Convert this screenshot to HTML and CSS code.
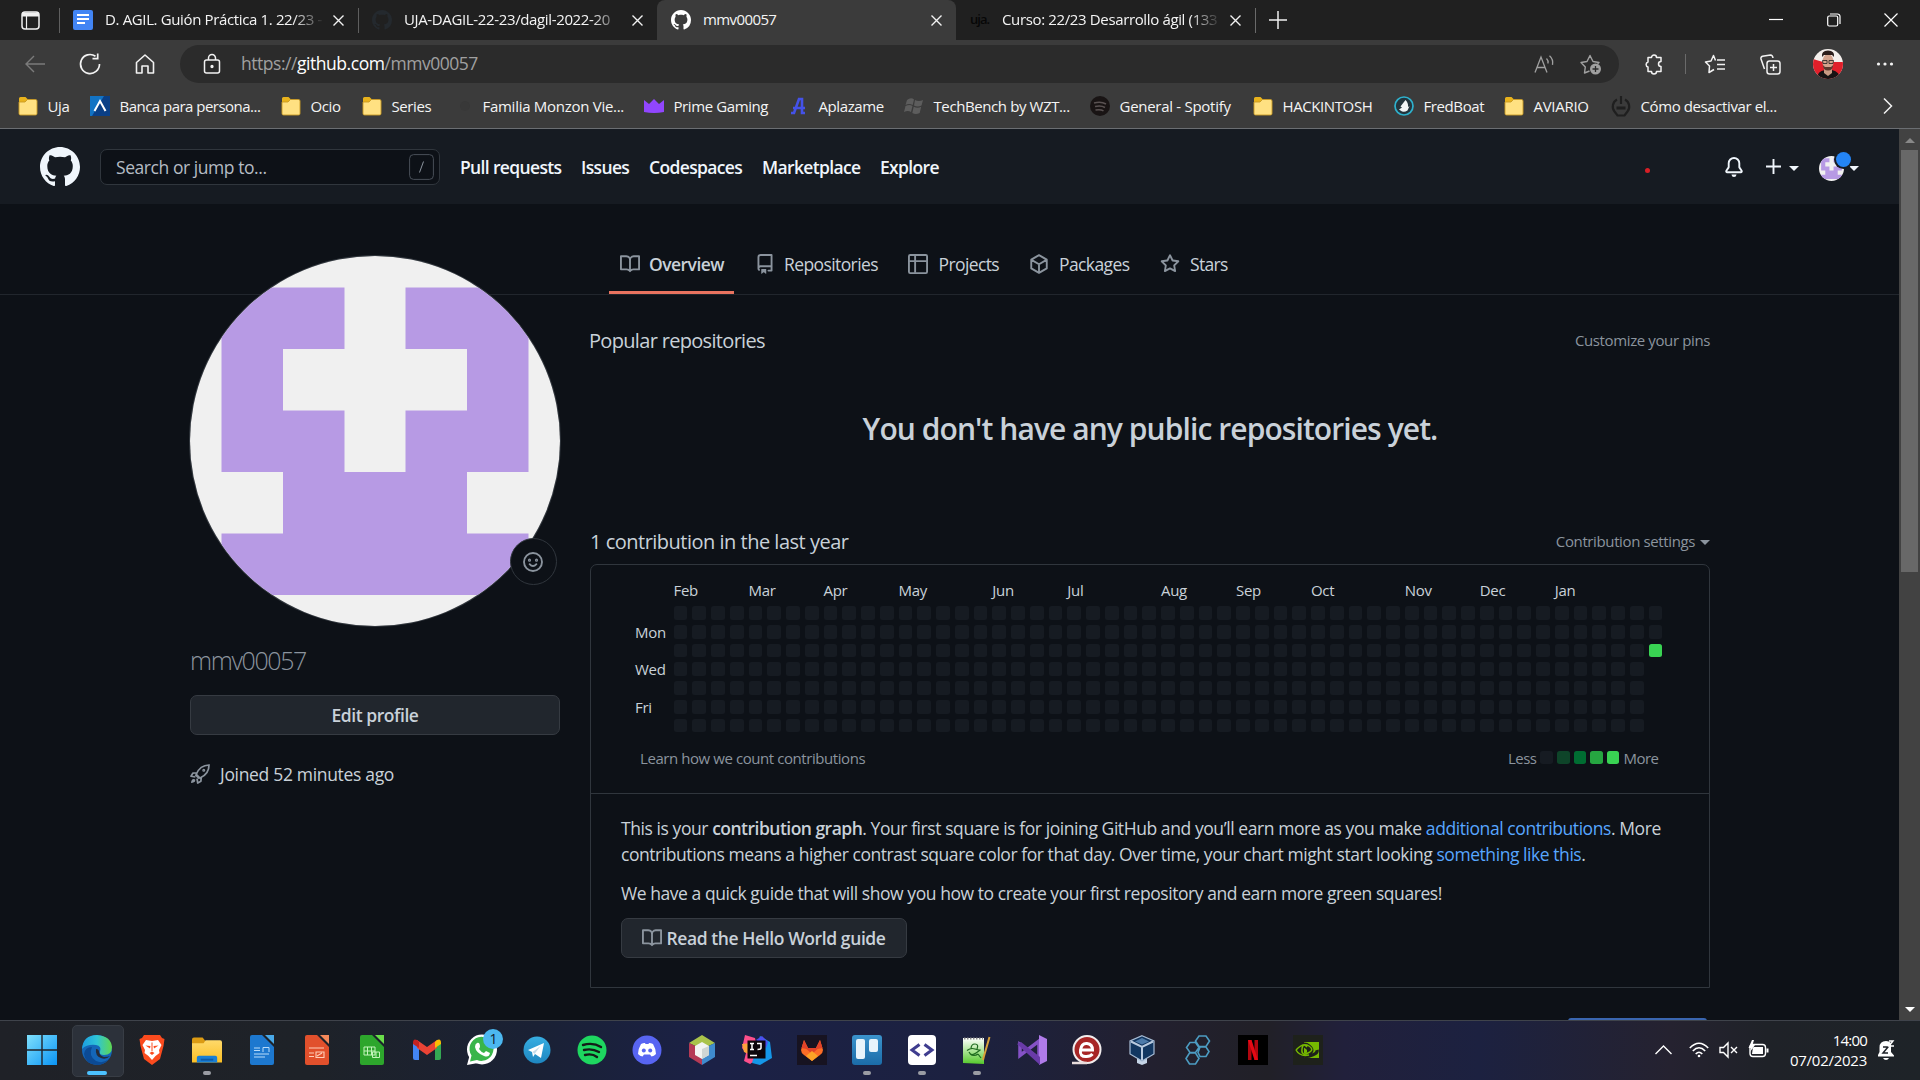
FILE: index.html
```
<!DOCTYPE html>
<html lang="en">
<head>
<meta charset="utf-8">
<title>mmv00057</title>
<link rel="stylesheet" href="styles.css">
</head>
<body>
<svg class="defs" aria-hidden="true">
  <defs>
    <symbol id="octocat" viewBox="0 0 16 16"><path d="M8 0C3.58 0 0 3.58 0 8c0 3.54 2.29 6.53 5.47 7.59.4.07.55-.17.55-.38 0-.19-.01-.82-.01-1.49-2.01.37-2.53-.49-2.69-.94-.09-.23-.48-.94-.82-1.13-.28-.15-.68-.52-.01-.53.63-.01 1.08.58 1.23.82.72 1.21 1.87.87 2.33.66.07-.52.28-.87.51-1.07-1.78-.2-3.64-.89-3.64-3.95 0-.87.31-1.59.82-2.15-.08-.2-.36-1.02.08-2.12 0 0 .67-.21 2.2.82.64-.18 1.32-.27 2-.27.68 0 1.36.09 2 .27 1.53-1.04 2.2-.82 2.2-.82.44 1.1.16 1.92.08 2.12.51.56.82 1.27.82 2.15 0 3.07-1.87 3.75-3.65 3.95.29.25.54.73.54 1.48 0 1.07-.01 1.93-.01 2.2 0 .21.15.46.55.38A8.013 8.013 0 0016 8c0-4.42-3.58-8-8-8z"/></symbol>
    <symbol id="book" viewBox="0 0 16 16"><path fill-rule="evenodd" d="M0 1.75A.75.75 0 01.75 1h4.253c1.227 0 2.317.59 3 1.501A3.744 3.744 0 0111.006 1h4.245a.75.75 0 01.75.75v10.5a.75.75 0 01-.75.75h-4.507a2.25 2.25 0 00-1.591.659l-.622.621a.75.75 0 01-1.06 0l-.622-.621A2.25 2.25 0 005.258 13H.75a.75.75 0 01-.75-.75V1.75zm8.755 3a2.25 2.25 0 012.25-2.25H14.5v9h-3.757c-.71 0-1.4.201-1.992.572l.004-7.322zm-1.504 7.324l.004-5.073-.002-2.253A2.25 2.25 0 005.003 2.5H1.5v9h3.757a3.75 3.75 0 011.994.574z"/></symbol>
    <symbol id="folder" viewBox="0 0 20 20"><path d="M1 2.5A1.5 1.5 0 012.5 1h5L9.500 3v3H1z" fill="#e8b21c"/><path d="M1 6h6l2.500-2.500h8A1.500 1.500 0 0119 5v12.500a1.500 1.500 0 01-1.500 1.500h-15A1.500 1.500 0 011 17.500z" fill="#ffe182" stroke="#c99b25" stroke-width=".9"/></symbol>
    <symbol id="close" viewBox="0 0 11 11"><path d="M.5.5l10 10m0-10l-10 10" fill="none" stroke="#f2f2f2" stroke-width="1.4"/></symbol>
    <symbol id="identicon" viewBox="0 0 370 370"><rect width="370" height="370" fill="#f0f0f0"/><path fill="#b79ae4" d="M31.500 31.500h123V93H93v61.500h61.500V216h61V154.500H277V93h-61.500V31.500h123V216H277v61.500h61.500V339h-307v-61.500H93V216H31.500z"/></symbol>
    <linearGradient id="gWin" x2="1" y2="1"><stop stop-color="#7fe0fc"/><stop offset="1" stop-color="#0a94f5"/></linearGradient>
    <linearGradient id="gEdge" x2="1" y2="0"><stop stop-color="#1b9de2"/><stop offset=".5" stop-color="#2fc4d6"/><stop offset="1" stop-color="#60d94f"/></linearGradient>
    <linearGradient id="gFile" x2="0" y2="1"><stop stop-color="#ffd96a"/><stop offset="1" stop-color="#fbbf24"/></linearGradient>
    <linearGradient id="gTg" x2="0" y2="1"><stop stop-color="#37aee2"/><stop offset="1" stop-color="#1e86c0"/></linearGradient>
    <linearGradient id="gNote" x2="0" y2="1"><stop stop-color="#fff"/><stop offset="1" stop-color="#55c92b"/></linearGradient>
    <linearGradient id="gTrello" x2="0" y2="1"><stop stop-color="#3b93cc"/><stop offset="1" stop-color="#1b6ca8"/></linearGradient>
  </defs>
</svg>

<div class="tabstrip">
  <div class="tab-actions"><svg width="19" height="19" viewBox="0 0 19 19" fill="none" stroke="#f0f0f0"><rect x="1" y="1" width="17" height="17" rx="3" stroke-width="1.500"/><path d="M1 3.500h17" stroke-width="4"/><path d="M5.500 4v14" stroke-width="1.200"/></svg></div>
  <div class="tab ruled">
    <svg class="fav" viewBox="0 0 20 20"><rect width="20" height="20" rx="2" fill="#4285f4"/><path d="M4 5h12M4 9h12M4 13h8" stroke="#fff" stroke-width="2"/></svg>
    <span class="tab-title fade">D. AGIL. Guión Práctica 1. 22/23 -</span><svg class="x"><use href="#close"/></svg>
  </div>
  <div class="tab ruled">
    <svg class="fav" fill="#24292e"><use href="#octocat"/></svg>
    <span class="tab-title fade">UJA-DAGIL-22-23/dagil-2022-20</span><svg class="x"><use href="#close"/></svg>
  </div>
  <div class="tab active">
    <svg class="fav" fill="#fff"><use href="#octocat"/></svg>
    <span class="tab-title">mmv00057</span><svg class="x"><use href="#close"/></svg>
  </div>
  <div class="tab">
    <span class="fav uja">uja.</span>
    <span class="tab-title fade">Curso: 22/23 Desarrollo ágil (133</span><svg class="x"><use href="#close"/></svg>
  </div>
  <div class="new-tab"><svg width="18" height="18" viewBox="0 0 18 18" stroke="#f0f0f0" stroke-width="1.500"><path d="M9 0v18M0 9h18"/></svg></div>
  <div class="win-controls" aria-hidden="true">
    <svg width="14" height="14" viewBox="0 0 14 14" fill="none" stroke="#fff" stroke-width="1.200"><path d="M0 6.500h14"/></svg>
    <svg width="14" height="14" viewBox="0 0 14 14" fill="none" stroke="#fff" stroke-width="1.200"><rect x=".7" y="3" width="10" height="10" rx="1.500"/><path d="M3 1h7.500a2.500 2.500 0 012.500 2.500V11"/></svg>
    <svg width="14" height="14" viewBox="0 0 14 14" fill="none" stroke="#fff" stroke-width="1.200"><path d="M.5.5l13 13m0-13l-13 13"/></svg>
  </div>
</div>

<div class="chrome">
  <div class="toolbar">
    <svg width="20" height="18" viewBox="0 0 20 18" fill="none" stroke="#7b7b7b" stroke-width="1.400"><path d="M20 9H1M9 1L1 9l8 8"/></svg>
    <svg width="22" height="22" viewBox="0 0 22 22" fill="none" stroke="#f2f2f2" stroke-width="1.700"><path d="M20.500 11A9.500 9.500 0 1116.500 3.300M18.700.5v5.200h-5.200"/></svg>
    <svg width="20" height="20" viewBox="0 0 20 20" fill="none" stroke="#f2f2f2" stroke-width="1.600" stroke-linejoin="round"><path d="M1.500 8.500L10 1l8.500 7.500V19h-5.500v-7H7v7H1.500z"/></svg>
    <div class="address">
      <svg class="lock" width="18" height="20" viewBox="0 0 18 20" fill="none" stroke="#f2f2f2" stroke-width="1.500"><rect x="1.500" y="6" width="15" height="13" rx="2"/><path d="M5.500 6V4a3.500 3.500 0 017 0v2"/><circle cx="9" cy="12.500" r=".9" fill="#f2f2f2"/></svg>
      <span class="url">https://<b>github.com</b>/mmv00057</span>
      <svg width="20" height="18" viewBox="0 0 20 18" fill="none" stroke="#a0a0a0" stroke-width="1.300"><path d="M1 17.500L7 2l6 15.500M3 12.500h8M12.500 3.500q2 2 1.500 5M15.500 .8q4 3.500 3 9"/></svg>
      <svg width="22" height="21" viewBox="0 0 22 21"><path fill="none" stroke="#a0a0a0" stroke-width="1.400" stroke-linejoin="round" d="M9.500 17L4.500 19l.8-6L1 8.500l6-1L10 1.500l3 6 6 1-1.500 1.500"/><circle cx="15.500" cy="15" r="5.500" fill="#a0a0a0"/><path d="M15.500 12v6m-3-3h6" stroke="#2b2b2b" stroke-width="1.300"/></svg>
    </div>
    <svg width="20" height="20" viewBox="0 0 20 20" fill="none" stroke="#f2f2f2" stroke-width="1.500" stroke-linejoin="round"><path d="M4 3.500h3.500a2.500 2.500 0 015 0H17v4a2.500 2.500 0 000 5v5h-4.500a2.500 2.500 0 01-5 0H4v-4.500a2.600 2.600 0 010-5z"/></svg>
    <span class="tool-rule"></span>
    <svg width="20" height="20" viewBox="0 0 20 20" fill="none" stroke="#f2f2f2" stroke-width="1.500" stroke-linejoin="round"><path d="M10.500 6.500L8.500 1.500l-2.500 5.500-5.500 1 4 4L4 18.500l5-3M12 6h8M12 10.500h8M12 15h8"/></svg>
    <svg width="21" height="21" viewBox="0 0 21 21" fill="none" stroke="#f2f2f2" stroke-width="1.500"><rect x="7" y="7" width="13" height="13" rx="2.500"/><path d="M13.500 10v7M10 13.500h7M4.500 15L1 5q-.5-2 1.500-2.800L10.500 1q2 0 2.500 3"/></svg>
    <svg width="30" height="30" viewBox="0 0 30 30"><defs><clipPath id="me"><circle cx="15" cy="15" r="15"/></clipPath></defs><g clip-path="url(#me)"><path fill="#f4efec" d="M0 0h30v30H0z"/><path fill="#e01f2a" d="M0 10l10 3h20v17H0z"/><path fill="#171314" d="M4 30q0-8 8-9h7q8 2 8 9z"/><path fill="#c99a84" d="M11 17h8v7l-4 3-4-3z"/><ellipse cx="15" cy="13" rx="5.500" ry="8" fill="#d3a38d"/><path fill="#2c1d1a" d="M9 8Q8 1.500 15 1.500T21 8l-2-2h-8z"/><path fill="#5a3a30" d="M9.800 16q.5 5.500 5.200 5.500t5.200-5.500l-2.200 2h-6z"/><path d="M9.500 11.500h4.500v3H10zM16 11.500h4.500l-.5 3h-4z" fill="none" stroke="#222" stroke-width=".8"/></g></svg>
    <svg width="18" height="4" viewBox="0 0 18 4" fill="#f2f2f2"><circle cx="2.500" cy="2" r="1.600"/><circle cx="9" cy="2" r="1.600"/><circle cx="15.500" cy="2" r="1.600"/></svg>
  </div>

  <div class="bookmarks">
    <div class="bm"><svg><use href="#folder"/></svg>Uja</div>
    <div class="bm tight"><svg viewBox="0 0 20 20"><path fill="#0a3f86" d="M0 0h20v20H0z"/><path fill="#1273c4" d="M0 0h14L2 20H0z"/><path d="M4.500 15L10 5l5.500 10" fill="none" stroke="#fff" stroke-width="2"/></svg>Banca para persona...</div>
    <div class="bm"><svg><use href="#folder"/></svg>Ocio</div>
    <div class="bm"><svg><use href="#folder"/></svg>Series</div>
    <div class="bm wide"><svg viewBox="0 0 20 20"><circle cx="12" cy="10" r="5" fill="#383838"/></svg>Familia Monzon Vie...</div>
    <div class="bm"><svg viewBox="0 0 20 20"><path fill="#9146ff" d="M0 4l5 4 5-5 5 5 5-4v12q-10 2-20 0z"/></svg>Prime Gaming</div>
    <div class="bm"><svg viewBox="0 0 20 20"><path d="M2 17h3l5-14h3v14h3M4 12h12" fill="none" stroke="#4452e8" stroke-width="2.600"/></svg>Aplazame</div>
    <div class="bm"><svg viewBox="0 0 20 20"><path fill="#5d5d5d" d="M3 4q4-3 7-.5L8.700 9Q5 7 1.500 9zM11 4q4 2 8 0l-1.500 5.500q-4 2-7.500 0zM1.500 10q4-2 7 0L7 16q-3-2-7 0zM9.700 10.800q4 2 7.500 0L15.700 17q-4 2-7.400 0z"/></svg>TechBench by WZT...</div>
    <div class="bm wide"><svg viewBox="0 0 20 20"><circle cx="10" cy="10" r="10" fill="#191414"/><path d="M4 7q7-2 12 1M5 10.500q6-1.500 10 1M5.500 14q5-1 8 .8" fill="none" stroke="#5a5252" stroke-width="1.500"/></svg>General - Spotify</div>
    <div class="bm"><svg><use href="#folder"/></svg>HACKINTOSH</div>
    <div class="bm"><svg viewBox="0 0 20 20"><circle cx="10" cy="10" r="9" fill="#24343c" stroke="#2eb1cd" stroke-width="1.700"/><path fill="#f2f5f6" d="M5 13.500l3-2-1.500-1 5-6.500q3 3 2.500 7l1.500-1-2 4.500q-4 2.500-7 0z"/></svg>FredBoat</div>
    <div class="bm wide"><svg><use href="#folder"/></svg>AVIARIO</div>
    <div class="bm"><svg viewBox="0 0 20 20" fill="none" stroke="#1f1f1f" stroke-width="2.200"><path d="M10 0v8M6 3.500a8 8 0 00-2.500 12l3 4h7l3-4a8 8 0 00-2.500-12"/><path d="M5.500 12h9" stroke-width="3"/></svg>Cómo desactivar el...</div>
    <svg class="more" width="10" height="16" viewBox="0 0 10 16" fill="none" stroke="#f2f2f2" stroke-width="1.500"><path d="M1 .5L8.500 8 1 15.500"/></svg>
  </div>
</div>

<div class="viewport">
  <div class="page">
    <header class="gh-header">
      <svg class="gh-logo" fill="#f0f6fc"><use href="#octocat"/></svg>
      <div class="search"><span>Search or jump to...</span><svg width="25" height="26" viewBox="0 0 25 26" fill="none" stroke="#484f58"><rect x=".6" y=".6" width="23.800" height="24.800" rx="4"/><path d="M10.500 18.500l4-11" stroke="#8b949e"/></svg></div>
      <nav class="gh-nav"><a>Pull requests</a><a>Issues</a><a>Codespaces</a><a>Marketplace</a><a>Explore</a></nav>
      <i class="rec"></i>
      <svg class="bell" width="20" height="20" viewBox="0 0 16 16" fill="#f0f6fc"><path d="M8 16a2 2 0 001.985-1.750c.017-.137-.097-.25-.235-.25h-3.500c-.138 0-.252.113-.235.25A2 2 0 008 16zM3 5a5 5 0 0110 0v2.947c0 .05.015.098.042.139l1.703 2.555A1.518 1.518 0 0113.482 13H2.518a1.518 1.518 0 01-1.263-2.360l1.703-2.554A.25.25 0 003 7.947V5zm5-3.500A3.500 3.500 0 004.500 5v2.947c0 .346-.102.683-.294.97l-1.703 2.556a.018.018 0 00-.003.01l.001.006.004.006.006.004h10.978l.006-.004.004-.006-.002-.017-1.703-2.554a1.750 1.750 0 01-.294-.97V5A3.500 3.500 0 008 1.500z"/></svg>
      <svg class="plus" width="15" height="15" viewBox="0 0 15 15" stroke="#f0f6fc" stroke-width="1.900"><path d="M7.500 0v15M0 7.500h15"/></svg>
      <i class="caret"></i>
      <div class="me"><svg width="25" height="25"><use href="#identicon"/></svg><i class="dot"></i></div>
      <i class="caret up1"></i>
    </header>

    <nav class="profile-nav">
      <a class="current"><svg><use href="#book"/></svg>Overview</a>
      <a class="n2"><svg viewBox="0 0 16 16"><path fill-rule="evenodd" d="M2 2.500A2.500 2.500 0 014.500 0h8.750a.75.75 0 01.75.75v12.500a.75.75 0 01-.75.75h-2.500a.75.75 0 110-1.500h1.750v-2h-8a1 1 0 00-.714 1.700.75.75 0 01-1.072 1.050A2.495 2.495 0 012 11.500v-9zm10.500-1V9h-8c-.356 0-.694.074-1 .208V2.500a1 1 0 011-1h8zM5 12.250v3.250a.25.25 0 00.4.2l1.450-1.087a.25.25 0 01.3 0L8.600 15.700a.25.25 0 00.4-.2v-3.250a.25.25 0 00-.25-.25h-3.500a.25.25 0 00-.25.25z"/></svg>Repositories</a>
      <a class="n3"><svg viewBox="0 0 16 16" fill="none" stroke="currentColor" stroke-width="1.500" class="line"><rect x=".75" y=".75" width="14.500" height="14.500" rx="1"/><path d="M5.700 1v14M1 5.700h14"/></svg>Projects</a>
      <a class="n4"><svg viewBox="0 0 16 16" class="line" stroke-width="1.500" stroke-linejoin="round"><path d="M8 .9l6.200 3.600v7L8 15.100 1.800 11.500v-7zM2 4.700l6 3.500 6-3.500M8 8.200V15"/></svg>Packages</a>
      <a class="n5"><svg viewBox="0 0 16 16"><path fill-rule="evenodd" d="M8 .25a.75.75 0 01.673.418l1.882 3.815 4.210.612a.75.75 0 01.416 1.279l-3.046 2.970.719 4.192a.75.75 0 01-1.088.791L8 12.347l-3.766 1.980a.75.75 0 01-1.088-.79l.72-4.194L.818 6.374a.75.75 0 01.416-1.280l4.210-.611L7.327.668A.75.75 0 018 .25zm0 2.445L6.615 5.500a.75.75 0 01-.564.41l-3.097.45 2.240 2.184a.75.75 0 01.216.664l-.528 3.084 2.769-1.456a.75.75 0 01.698 0l2.770 1.456-.53-3.084a.75.75 0 01.216-.664l2.240-2.183-3.096-.45a.75.75 0 01-.564-.41L8 2.694z"/></svg>Stars</a>
    </nav>

    <div class="columns">
      <aside class="sidebar">
        <div class="avatar"><svg width="370" height="370"><use href="#identicon"/></svg>
          <span class="status"><svg width="20" height="20" viewBox="0 0 16 16" fill="none" stroke="#8b949e" stroke-width="1.500"><circle cx="8" cy="8" r="7.200"/><path d="M5.300 9.700q2.700 3 5.400 0" stroke-linecap="round"/><circle cx="5.200" cy="6.500" r=".5"/><circle cx="10.800" cy="6.500" r=".5"/></svg></span>
        </div>
        <h1 class="username">mmv00057</h1>
        <a class="btn edit">Edit profile</a>
        <p class="joined"><svg width="20" height="20" viewBox="0 0 16 16" fill="none" stroke="#8b949e" stroke-width="1.400" stroke-linejoin="round"><path d="M5 8.200Q8 1 15.200.8 15.300 8 8 11.200zM5.500 7L2.300 7.300.8 9.800l3.500.6M9 10.500l-.3 3.300-2.500 1.400-.6-3.500M4.200 8.500l3.300 3.300"/><circle cx="11" cy="5" r=".5"/><path d="M.8 15.200q.2-3 2-3.200t1.400 1.400q-.4 1.600-3.400 1.800z" fill="#8b949e" stroke="none"/></svg>Joined 52 minutes ago</p>
      </aside>

      <main class="main">
        <div class="section-head"><h2>Popular repositories</h2><a class="pins">Customize your pins</a></div>
        <h3 class="blank">You don't have any public repositories yet.</h3>
        <div class="section-head contrib"><h2 class="wide2">1 contribution in the last year</h2><a>Contribution settings<i class="caret grey"></i></a></div>
        <section class="box">
          <div class="calendar">
            <div class="months">
              <span class="m1">Feb</span><span class="m5">Mar</span><span class="m9">Apr</span><span class="m13">May</span><span class="m18">Jun</span><span class="m22">Jul</span><span class="m27">Aug</span><span class="m31">Sep</span><span class="m35">Oct</span><span class="m40">Nov</span><span class="m44">Dec</span><span class="m48">Jan</span>
            </div>
            <div class="weeks">
              <div class="weekdays"><span></span><span>Mon</span><span></span><span>Wed</span><span></span><span>Fri</span><span></span></div>
              <div class="days" id="days"></div>
            </div>
            <div class="cal-foot"><span>Learn how we count contributions</span><div class="legend">Less<i class="l0"></i><i class="l1"></i><i class="l2"></i><i class="l3"></i><i class="l4"></i>More</div></div>
          </div>
          <div class="intro">
            <p><span class="first">This is your <b>contribution graph</b>. Your first square is for joining GitHub and you’ll earn more as you make <a>additional contributions</a>. More</span><br>contributions means a higher contrast square color for that day. Over time, your chart might start looking <a>something like this</a>.</p>
            <p>We have a quick guide that will show you how to create your first repository and earn more green squares!</p>
            <a class="btn guide"><svg><use href="#book"/></svg>Read the Hello World guide</a>
          </div>
        </section>
        <div class="next-button"></div>
      </main>
    </div>
  </div>
  <div class="scrollbar"><i class="arrow-up"></i><div class="thumb"></div><i class="arrow-down"></i></div>
</div>

<footer class="taskbar">
  <div class="apps">
    <div><svg viewBox="0 0 30 30" fill="url(#gWin)"><path d="M0 0h14.300v14.300H0zM15.700 0H30v14.300H15.700zM0 15.700h14.300V30H0zM15.700 15.700H30V30H15.700z"/></svg></div>
    <div class="focused"><svg viewBox="0 0 30 30"><circle cx="15" cy="15" r="15" fill="#1466b8"/><path fill="url(#gEdge)" d="M0 14Q1 0 15 0q14 1 15 12 0 8-8 8-5 0-4-3 2-6-4-7Q5 9 0 14z"/><path fill="#0c4a94" d="M10 12q-4 9 4 14 7 3 13-2-5 6-12 6Q3 29 2 19q1-7 8-7z"/><path fill="#262c38" d="M17 17q1 4 5 5 4 0 6-1-4 4-9 2-6-2-5-9 3 0 3 3z"/></svg><i class="bar"></i></div>
    <div><svg viewBox="0 0 30 30"><path fill="#fb4b1e" d="M7 0h16l2 3 2.500 1-1 7-3.500 13-8 6-8-6-3.500-13-1-7L5 3z"/><path fill="#fff" d="M9 5l6 1 6-1 3.500 5-2.500 5 .5 3-4 3-3.500 4-3.500-4-4-3 .5-3-2.500-5z"/><path fill="#fb4b1e" d="M8.500 10.500l5 .5-.5 2.500zM21.500 10.500l-5 .5.5 2.500zM12.500 18l2.500-1.500 2.500 1.500-2.500 2zM14.500 7.500h1V16h-1z"/></svg></div>
    <div><svg viewBox="0 0 31 30"><path fill="#dc9b13" d="M0 4q0-2 2-2h9l3 4v4H0z"/><path fill="url(#gFile)" d="M0 8h12l2-3h15q2 0 2 2v21H0z"/><path fill="#1a7fd4" d="M5 28v-5q0-2 2-2h17q2 0 2 2v5z"/><path fill="#0d5ba8" d="M9 24h13v2H9z"/></svg><i class="dotmark"></i></div>
    <div><svg viewBox="0 0 30 30"><path fill="#1d78cf" d="M5 0h10l12 12v16q0 2-2 2H5q-2 0-2-2V2q0-2 2-2z"/><path fill="#49a9e8" d="M18 0h9v9z"/><path d="M7 13h6M7 15.500h6M7 19h15M7 22h11M16 17v-4.500h6V17" stroke="#b9dcfa" fill="none"/></svg></div>
    <div><svg viewBox="0 0 30 30"><path fill="#e1502c" d="M5 0h10l12 12v16q0 2-2 2H5q-2 0-2-2V2q0-2 2-2z"/><path fill="#f4895a" d="M18 0h9v9z"/><path d="M7 13h15M7 18h5M7 21.500h5M14 17h8v5.500h-8zM15 21l5-3" stroke="#ffcdb8" fill="none" stroke-width="1.100"/></svg></div>
    <div><svg viewBox="0 0 30 30"><path fill="#2da62c" d="M5 0h10l12 12v16q0 2-2 2H5q-2 0-2-2V2q0-2 2-2z"/><path fill="#6ade4a" d="M18 0h9v9z"/><path d="M7 12h11v8H7zM7 16h11M10.500 12v8M14.500 12v8M15.500 17h7v5.500h-7zM19 17v5.500" stroke="#c4f5bb" fill="none"/></svg></div>
    <div><svg viewBox="0 0 30 30"><path fill="#4285f4" d="M1 8l6 4v13H3q-2 0-2-2z"/><path fill="#34a853" d="M29 8l-6 4v13h4q2 0 2-2z"/><path fill="#ea4335" d="M5 5l10 7 10-7v8l-10 7-10-7z"/><path fill="#c5221f" d="M1 8q0-5 4-3l2 2v6l-6-4z"/><path fill="#fbbc04" d="M29 8q0-5-4-3l-2 2v6l6-4z"/></svg></div>
    <div><svg viewBox="0 0 30 30"><circle cx="15" cy="14.500" r="15" fill="#fff"/><path fill="#fff" d="M0 30l3-11 8 9z"/><path fill="#39b54a" d="M3 26.500l1.500-6A12 12 0 1110 25z"/><path fill="#fff" d="M10 8q3-1 3 4l-1 2q2 3 5 4l2-2 4 2q-1 5-6 3-8-3-9-9 0-3 2-4z"/></svg><b class="badge">1</b></div>
    <div><svg viewBox="0 0 30 30"><circle cx="15" cy="15" r="13.500" fill="url(#gTg)"/><path fill="#fff" d="M6 15l16-7-3 15-6-4-2 3-1-5z"/><path d="M10.500 17l8-6-6 8" fill="#c6dcea"/></svg></div>
    <div><svg viewBox="0 0 30 30"><circle cx="15" cy="15" r="14.500" fill="#1ed760"/><path d="M6 10q10-3 18 2M7 15q8-2 15 2M8 20q7-2 12 2" fill="none" stroke="#141c18" stroke-width="2.400" stroke-linecap="round"/></svg></div>
    <div><svg viewBox="0 0 30 30"><circle cx="15" cy="15" r="14.500" fill="#5865f2"/><path fill="#fff" d="M9 9q3-1.500 4-1l.5 1h3L17 8q2 0 4 1 3 5 3 10-2 2-4.500 2.500L18 19.500h-6l-1.500 2Q8 21 6 19q0-5 3-10z"/><circle cx="11.800" cy="15.500" r="2" fill="#5865f2"/><circle cx="18.200" cy="15.500" r="2" fill="#5865f2"/></svg></div>
    <div><svg viewBox="0 0 30 30"><path fill="#a9c34b" d="M15 0l13 8-13 6L2 8z"/><path fill="#b53a55" d="M2 8l13 6v16L2 22z"/><path fill="#3f8bce" d="M28 8l-13 6v16l13-8z"/><path fill="#f2f4f2" d="M15 7l7 4v9l-7 4-7-4v-9z"/><path fill="#cfd6d4" d="M15 14l7-3v9l-7 4z"/></svg></div>
    <div><svg viewBox="0 0 30 30"><path fill="#fd4f8b" d="M3 0l10 3 4 20-9 6-6-3 2-8-4-5z"/><path fill="#fca23a" d="M0 9l9-1v12l-7-3z"/><path fill="#1597e8" d="M18 1l10 6 2 16-12 7-8-2z"/><path fill="#4d4ff0" d="M20 1l6 6-2 6-10-8z"/><path fill="#0c070c" d="M5.500 5.500h18v18h-18z"/><path d="M8 8.500h4M10 8.500v6M8 14.500h4M15 8.500h4v4.500q0 1.500-3.500 1.500M8 20.500h7" stroke="#fff" stroke-width="1.500" fill="none"/></svg></div>
    <div><svg viewBox="0 0 30 30"><path fill="#171321" d="M0 0h30v30H0z"/><path fill="#fc6d26" d="M7 5l4 8h8l4-8 3 10q0 3-3 5l-8 6-8-6q-3-2-3-5z"/><path fill="#e24329" d="M7 5l4 8h8l4-8 2.500 8-5 1L15 19l-5.500-5-5-1z"/><path fill="#fca326" d="M9 21l6-5 6 5-6 5z"/></svg></div>
    <div><svg viewBox="0 0 30 30"><rect width="30" height="30" rx="3" fill="url(#gTrello)"/><rect x="4" y="4" width="9" height="20" rx="2" fill="#e8f4fb"/><rect x="17" y="4" width="9" height="13" rx="2" fill="#e8f4fb"/></svg><i class="dotmark"></i></div>
    <div><svg viewBox="0 0 30 30"><rect x="1" width="28" height="30" rx="4" fill="#fff"/><path d="M12.500 9.500L5 15l7.500 5.500M17.500 9.500L25 15l-7.500 5.500" fill="none" stroke="#3f3d8f" stroke-width="3"/></svg><i class="dotmark"></i></div>
    <div><svg viewBox="0 0 30 30"><path fill="url(#gNote)" d="M1 3h21v26l-21-1z"/><path d="M2 3.500h19" stroke="#888" stroke-width="2" stroke-dasharray="1.500 1.500"/><path d="M5 15.500q4-3 8-1.500t5 1-4 3-7-1M9 14q0-5 4-5t2 5M8 19q4 3 8 0M16 19l3 4" fill="none" stroke="#1e6a1f" stroke-width="1.200"/><path d="M27.500 2L22 21l-1 4" stroke="#d8a13a" stroke-width="2"/></svg><i class="dotmark"></i></div>
    <div><svg viewBox="0 0 30 30"><path d="M3 9.500L22 24V6L3 20.500z" fill="none" stroke="#8552c6" stroke-width="3.500"/><path fill="#b07bea" d="M22 0l8 4v22l-8 4z"/><path fill="#693ba8" d="M0 9l4-2 19 15v8z"/></svg></div>
    <div><svg viewBox="0 0 30 30"><circle cx="15" cy="14.500" r="13.500" fill="#a72626" stroke="#f2eded" stroke-width="2"/><path d="M0 28h15" stroke="#e8dcdc" stroke-width="2.500"/><path d="M8.500 15h12q0-6-5.500-6.500T8.500 15t6 6.500q4 0 6-2.500" fill="none" stroke="#fff" stroke-width="3"/></svg></div>
    <div><svg viewBox="0 0 30 30"><path fill="#c5d4e6" d="M10 22h10v6l-5 2-5-2z"/><path fill="#123761" stroke="#a8bdd6" stroke-width="1.200" d="M15 .7L27 6v13l-12 7-12-7V6z"/><path d="M4 6.500L15 12l11-5.500M15 12v13" fill="none" stroke="#b9cbe0" stroke-width="2"/><path fill="#4c7aa9" d="M15 3l7 3.500-7 3-7-3z"/></svg></div>
    <div><svg viewBox="0 0 30 30" fill="none" stroke="#4c9cc2" stroke-width="1.600"><path d="M16 1h7l3.500 5-3.500 5.500h-7L12.500 6zM7 7.500h5.500l3.500 5-3.500 5H7l-3.500-5zM17 12h6l3 4.500-3 5h-6l-2-4zM6.500 18h6l3.500 5.500-3.500 5.500h-6L3 23.500z"/></svg></div>
    <div><svg viewBox="0 0 30 30"><path d="M0 0h30v30H0z"/><path fill="#b1060f" d="M10 5h3.500v20H10zM16.500 5H20v20h-3.500z"/><path fill="#e50914" d="M10 5h3.500L20 25h-3.500z"/></svg></div>
    <div><svg viewBox="0 0 30 30"><path fill="#1e211b" d="M0 0h30v30H0z"/><path fill="#76b900" d="M11 7h15v16H11z"/><path d="M3 15q7-9 13-4t-1 8-7-4 5-3 1 4M3 15q4 8 13 6t8-6" fill="none" stroke="#1e211b" stroke-width="3.400"/><path d="M3 15q7-8 13-4t-1 7-6-4 5-2M3 15q4 7 13 5" fill="none" stroke="#76b900" stroke-width="1.500"/></svg></div>
  </div>
  <div class="tray">
    <svg width="17" height="10" viewBox="0 0 17 10" fill="none" stroke="#fff" stroke-width="1.400"><path d="M.5 9l8-8 8 8"/></svg>
    <svg class="wifi" width="20" height="16" viewBox="0 0 20 16" fill="none" stroke="#fff" stroke-width="1.600"><path d="M.8 6q9.200-9.500 18.400 0M3.800 9q6.200-6.500 12.400 0M6.700 12q3.300-3.500 6.600 0"/><circle cx="10" cy="14" r="1.300" fill="#fff" stroke="none"/></svg>
    <svg class="mute" width="19" height="16" viewBox="0 0 19 16" fill="none" stroke="#fff" stroke-width="1.400"><path d="M1 5.500h3.500L9 1v14l-4.500-4.500H1zM12 5l6 6m0-6l-6 6"/></svg>
    <svg class="battery" width="21" height="18" viewBox="0 0 21 18"><rect x="2" y="4.500" width="15.500" height="12" rx="3" fill="none" stroke="#fff" stroke-width="1.400"/><path fill="#fff" d="M5 7h10v7H4zM18.500 8.500h2v4h-2zM4 0L.5 8H3L2 12l5-7H4.500L6 0z"/></svg>
    <div class="clock"><span class="hour">14:00</span><span>07/02/2023</span></div>
    <svg class="dnd" width="18" height="20" viewBox="0 0 18 20"><path fill="#fff" d="M1 15l1.500-3V7.500Q2.500 1 9 1q3 0 5 2v9l3 3.500v1H1zM6 18h6q-1 2-3 2t-3-2z"/><path d="M6 7h5l-5 6h5" fill="none" stroke="#1d2127" stroke-width="1.500"/><path d="M12 1h4l-4 5h5" fill="none" stroke="#fff" stroke-width="1.400"/></svg>
  </div>
</footer>
<script src="calendar.js"></script>
</body>
</html>
```
FILE: styles.css
```
* { box-sizing: border-box; margin: 0; padding: 0; }
body {
  width: 1920px; height: 1080px; overflow: hidden;
  display: flex; flex-direction: column;
  background: #0d1117; color: #c9d1d9;
  font-family: "Open Sans", "Noto Sans", sans-serif;
  font-size: 17.5px; letter-spacing: -0.44px;
}
svg { display: block; flex: none; overflow: visible; }
i { font-style: normal; display: block; flex: none; }
.defs { position: absolute; width: 0; height: 0; }

/* tab strip */
.tabstrip { display: flex; height: 40px; flex: none; background: #202020; color: #f4f4f4; font-size: 15px; letter-spacing: -0.36px; }
.tab-actions { width: 59px; padding: 11px 0 0 21px; }
.tab { width: 299px; height: 40px; padding-left: 14px; display: flex; align-items: center; gap: 12px; white-space: nowrap; }
.ruled { background: linear-gradient(#5f5f5f, #5f5f5f) 0 8px / 1px 25px no-repeat; }
.active { background: #3b3b3b; border-radius: 8px 8px 0 0; }
.active .tab-title { letter-spacing: -0.6px; }
.fav { width: 20px; height: 20px; }
.uja { color: #070707; font-size: 13px; font-weight: 600; line-height: 18px; letter-spacing: -1px; }
.tab-title { width: 217px; line-height: 24px; margin-top: -2px; }
.fade { -webkit-mask-image: linear-gradient(90deg, #000 188px, transparent 219px); mask-image: linear-gradient(90deg, #000 188px, transparent 219px); }
.x { width: 11px; height: 11px; margin-left: -1px; }
.new-tab { width: 44px; padding: 11px 0 0 14px; background: linear-gradient(#6a6a6a, #6a6a6a) 0 8px / 1px 25px no-repeat; }
.win-controls { flex: 1; display: flex; justify-content: flex-end; gap: 43.5px; padding: 13px 22px 0 0; }

/* toolbar and bookmarks */
.chrome { height: 89px; flex: none; background: #3b3b3b; border-bottom: 1px solid #6b6e72; color: #f4f4f4; }
.toolbar {
  height: 48px; padding-left: 7px; display: grid; align-items: center; justify-items: center;
  grid-template-columns: 55px 55px 56px 1453px 55px 8px 52px 58px 58px 56px;
}
.address { width: 1439px; height: 38px; border-radius: 19px; background: #2b2b2b; display: flex; align-items: center; padding: 0 17px 0 23px; }
.url { flex: 1; margin-left: 20px; color: #a0a0a0; font-size: 17.5px; letter-spacing: -0.46px; padding-bottom: 3px; }
.url b { font-weight: 400; color: #fff; }
.address svg + svg { margin-left: 26px; }
.tool-rule { width: 1px; height: 20px; background: #6a6a6a; }
.bookmarks {
  height: 36px; padding-left: 18px; display: grid; align-items: center;
  grid-template-columns: 72px 191px 81px 91px 191px 145px 115px 186px 163px 141px 110px 107px 269px 20px;
  font-size: 15px; letter-spacing: -0.4px;
}
.bm { display: flex; align-items: center; gap: 9.5px; white-space: nowrap; height: 20px; line-height: 18px; padding-bottom: 1px; }
.bm.tight { letter-spacing: -0.52px; }
.bm.wide { letter-spacing: -0.28px; }
.bm svg { width: 20px; height: 20px; }
.more { margin-left: 3px; }

/* viewport */
.viewport { display: flex; height: 891px; flex: none; overflow: hidden; }
.page { width: 1899px; overflow: hidden; }
.scrollbar { width: 21px; background: #424242; display: flex; flex-direction: column; align-items: center; }
.arrow-up { margin: 9px 0 7px; border: 5px solid transparent; border-top: 0; border-bottom: 5px solid #888; }
.thumb { width: 17px; height: 422px; background: #686868; }
.arrow-down { margin-top: auto; margin-bottom: 8px; border: 5px solid transparent; border-bottom: 0; border-top-color: #fff; }

/* site header */
.gh-header { height: 75px; background: #161b22; display: flex; align-items: center; padding-left: 40px; }
.gh-logo { width: 40px; height: 40px; }
.search { width: 340px; height: 36px; margin-left: 20px; border: 1px solid #30363d; border-radius: 7px; background: #0d1117; display: flex; align-items: center; justify-content: space-between; padding: 0 5px 0 15px; color: #b5bcc4; }
.gh-nav { display: grid; grid-template-columns: 121px 68px 113px 118px 80px; margin-left: 20px; color: #f0f6fc; font-weight: 600; letter-spacing: -0.65px; white-space: nowrap; }
.rec { width: 5px; height: 5px; border-radius: 50%; background: #d81f26; margin: 8px 0 0 685px; }
.bell { margin-left: 74px; }
.plus { margin-left: 22px; }
.caret { border: 5px solid transparent; border-top-color: #f0f6fc; border-bottom: 0; margin: 4px 0 0 8px; }
.me { position: relative; margin: 3px 0 0 19.5px; width: 25px; height: 25px; }
.me > svg { border-radius: 50%; overflow: hidden; }
.dot { position: absolute; left: 17px; top: -4px; width: 15px; height: 15px; border-radius: 50%; background: #2484f4; box-shadow: 0 0 0 2px #161b22; }
.up1 { margin-left: 5px; margin-top: 3px; }

/* profile navigation */
.profile-nav { height: 91px; border-bottom: 1px solid #21262d; padding: 34px 0 0 609px; display: flex; gap: 10px; letter-spacing: -0.6px; white-space: nowrap; }
.profile-nav a { height: 56px; padding: 0 0 4px 11px; display: flex; align-items: center; gap: 9px; }
.profile-nav svg { width: 20px; height: 20px; fill: #8b949e; color: #8b949e; }
.profile-nav .line { fill: none; stroke: #8b949e; }
.profile-nav .current { width: 125px; font-weight: 600; padding-bottom: 1px; border-bottom: 3px solid #e8735f; letter-spacing: -0.54px; }
.n2 { width: 143px; }
.profile-nav .n3 { width: 111px; gap: 10.500px; }
.profile-nav .n4 { width: 121px; gap: 10px; }
.profile-nav .n5 { letter-spacing: -0.7px; gap: 10px; }

/* profile columns */
.columns { display: grid; grid-template-columns: 370px 1120px; gap: 30px; padding-left: 190px; }
.sidebar { margin-top: -39.500px; position: relative; }
.avatar { width: 370px; height: 370px; position: relative; }
.avatar > svg { border-radius: 50%; overflow: hidden; box-shadow: 0 0 0 1px #30363d; }
.status { position: absolute; left: 319.500px; top: 282.500px; width: 47px; height: 47px; border-radius: 50%; background: #0d1117; border: 1px solid #30363d; display: flex; align-items: center; justify-content: center; }
.username { margin-top: 19.500px; font-size: 25px; font-weight: 300; line-height: 30px; letter-spacing: -1.38px; color: #8b949e; }
.btn { display: flex; align-items: center; justify-content: center; height: 40px; border: 1px solid #363b42; border-radius: 7px; background: #21262d; font-weight: 600; }
.edit { margin-top: 20px; padding-bottom: 1px; }
.joined { display: flex; align-items: center; gap: 10px; height: 20px; margin-top: 29px; line-height: 18px; padding-bottom: 1px; letter-spacing: -0.32px; }
.section-head { display: flex; justify-content: space-between; align-items: center; height: 30px; margin-top: 30px; }
.section-head h2 { font-size: 20px; font-weight: 400; letter-spacing: -0.68px; margin-left: -1px; }
.section-head .wide2 { letter-spacing: -0.5px; margin-left: 0; }
.section-head a { font-size: 15px; color: #8b949e; letter-spacing: -0.38px; display: flex; align-items: center; }
.blank { margin-top: 52px; font-size: 30px; line-height: 44px; font-weight: 600; text-align: center; letter-spacing: -0.92px; }
.section-head.contrib { margin-top: 75px; }
.grey { border-top-color: #8b949e; margin: 3px 0 0 5px; }

/* contribution calendar */
.box { margin-top: 8px; border: 1px solid #30363d; border-radius: 7px 7px 0 0; }
.calendar { height: 229px; border-bottom: 1px solid #30363d; padding: 15px 49px 0 44px; }
.months { display: grid; grid-template-columns: repeat(53, 18.75px); margin-left: 38.5px; height: 26px; line-height: 21px; font-size: 15px; letter-spacing: -0.3px; }
.months span { grid-row: 1; width: 0; white-space: nowrap; }
.m1 { grid-column: 1; } .m5 { grid-column: 5; } .m9 { grid-column: 9; } .m13 { grid-column: 13; }
.m18 { grid-column: 18; } .m22 { grid-column: 22; } .m27 { grid-column: 27; } .m31 { grid-column: 31; }
.m35 { grid-column: 35; } .m40 { grid-column: 40; } .m44 { grid-column: 44; } .m48 { grid-column: 48; }
.weeks { display: flex; height: 127px; }
.weekdays { flex: none; width: 38.5px; display: grid; grid-template-rows: repeat(7, 18.75px); font-size: 15px; line-height: 14px; letter-spacing: -0.3px; }
.days { flex: none; display: grid; grid-auto-flow: column; grid-template-rows: repeat(7, 13.75px); grid-auto-columns: 13.75px; gap: 5px; }
.days i { border-radius: 2.5px; background: #161b22; }
.days .l4 { background: #39d353; }
.cal-foot { display: flex; justify-content: space-between; margin-top: 14.5px; padding-left: 5px; height: 20px; line-height: 20px; font-size: 15px; letter-spacing: -0.43px; color: #8b949e; }
.legend { display: flex; align-items: center; gap: 4px; letter-spacing: -0.5px; padding-right: 1.500px; }
.legend i { width: 12.6px; height: 12.5px; border-radius: 2.5px; }
.legend .l0 { background: #161b22; }
.legend .l1 { background: #0e4429; }
.legend .l2 { background: #006d32; }
.legend .l3 { background: #26a641; }
.legend .l4 { background: #39d353; }

.intro { padding: 21px 30px 29px; white-space: nowrap; line-height: 26.25px; }
.intro .first { letter-spacing: -0.425px; }
.intro p { margin-bottom: 12.500px; }
.intro a:not(.btn) { color: #58a6ff; }
.intro b { font-weight: 600; letter-spacing: -0.52px; }
.intro .btn { width: 286px; margin-top: -1px; gap: 4px; letter-spacing: -0.4px; }
.guide svg { width: 20px; height: 20px; fill: #8b949e; }
.next-button { width: 139px; height: 20px; margin: 30px 3px 0 auto; border-top: 2px solid #3a66b0; border-radius: 3px; }

/* taskbar */
.taskbar {
  height: 60px; flex: none; border-top: 1px solid #3f434b; display: flex; justify-content: space-between; padding-left: 14px;
  background: linear-gradient(90deg, #1f2127 0, #1e2228 16%, #1a2135 28%, #1b2146 37%, #1c2140 50%, #22202f 60%, #212027 66%, #21203b 70%, #1c2140 77%, #252230 87%, #1f2228 92%, #1e2328 100%);
}
.apps { display: flex; height: 58px; }
.apps div { width: 55.05px; display: flex; align-items: center; justify-content: center; position: relative; }
.apps svg { width: 30px; height: 30px; position: relative; }
.focused::before { content: ""; position: absolute; left: 3px; top: 4px; width: 50px; height: 50px; border-radius: 5px; background: #2c313a; border: 1px solid #383d45; }
.bar, .dotmark { position: absolute; bottom: 4px; left: 17.500px; width: 20px; height: 4px; border-radius: 2px; background: #4cc2ff; }
.dotmark { left: 23.500px; width: 8px; background: #9a9ca3; }
.badge { position: absolute; left: 29px; top: 8px; width: 20px; height: 20px; border-radius: 50%; background: #4cb8f0; color: #10202c; font-size: 14px; font-weight: 400; line-height: 19px; text-align: center; }
.tray { display: flex; align-items: center; height: 58px; padding-right: 25px; color: #fff; }
.wifi { margin-left: 17px; }
.mute { margin-left: 10px; }
.battery { margin-left: 10px; margin-top: -3px; }
.clock { margin-left: 21px; display: flex; flex-direction: column; align-items: flex-end; font-size: 15px; line-height: 20px; letter-spacing: -0.26px; margin-top: -1px; }
.hour { letter-spacing: -0.8px; }
.dnd { margin-left: 10px; }
```
FILE: calendar.js
```
// One cell per day: 52 full weeks, then Sunday to Tuesday of the current one.
const days = document.getElementById('days');
const total = 52 * 7 + 3;
for (let d = 0; d < total; d++) {
  const cell = document.createElement('i');
  if (d === total - 1) cell.className = 'l4';
  days.append(cell);
}
```
